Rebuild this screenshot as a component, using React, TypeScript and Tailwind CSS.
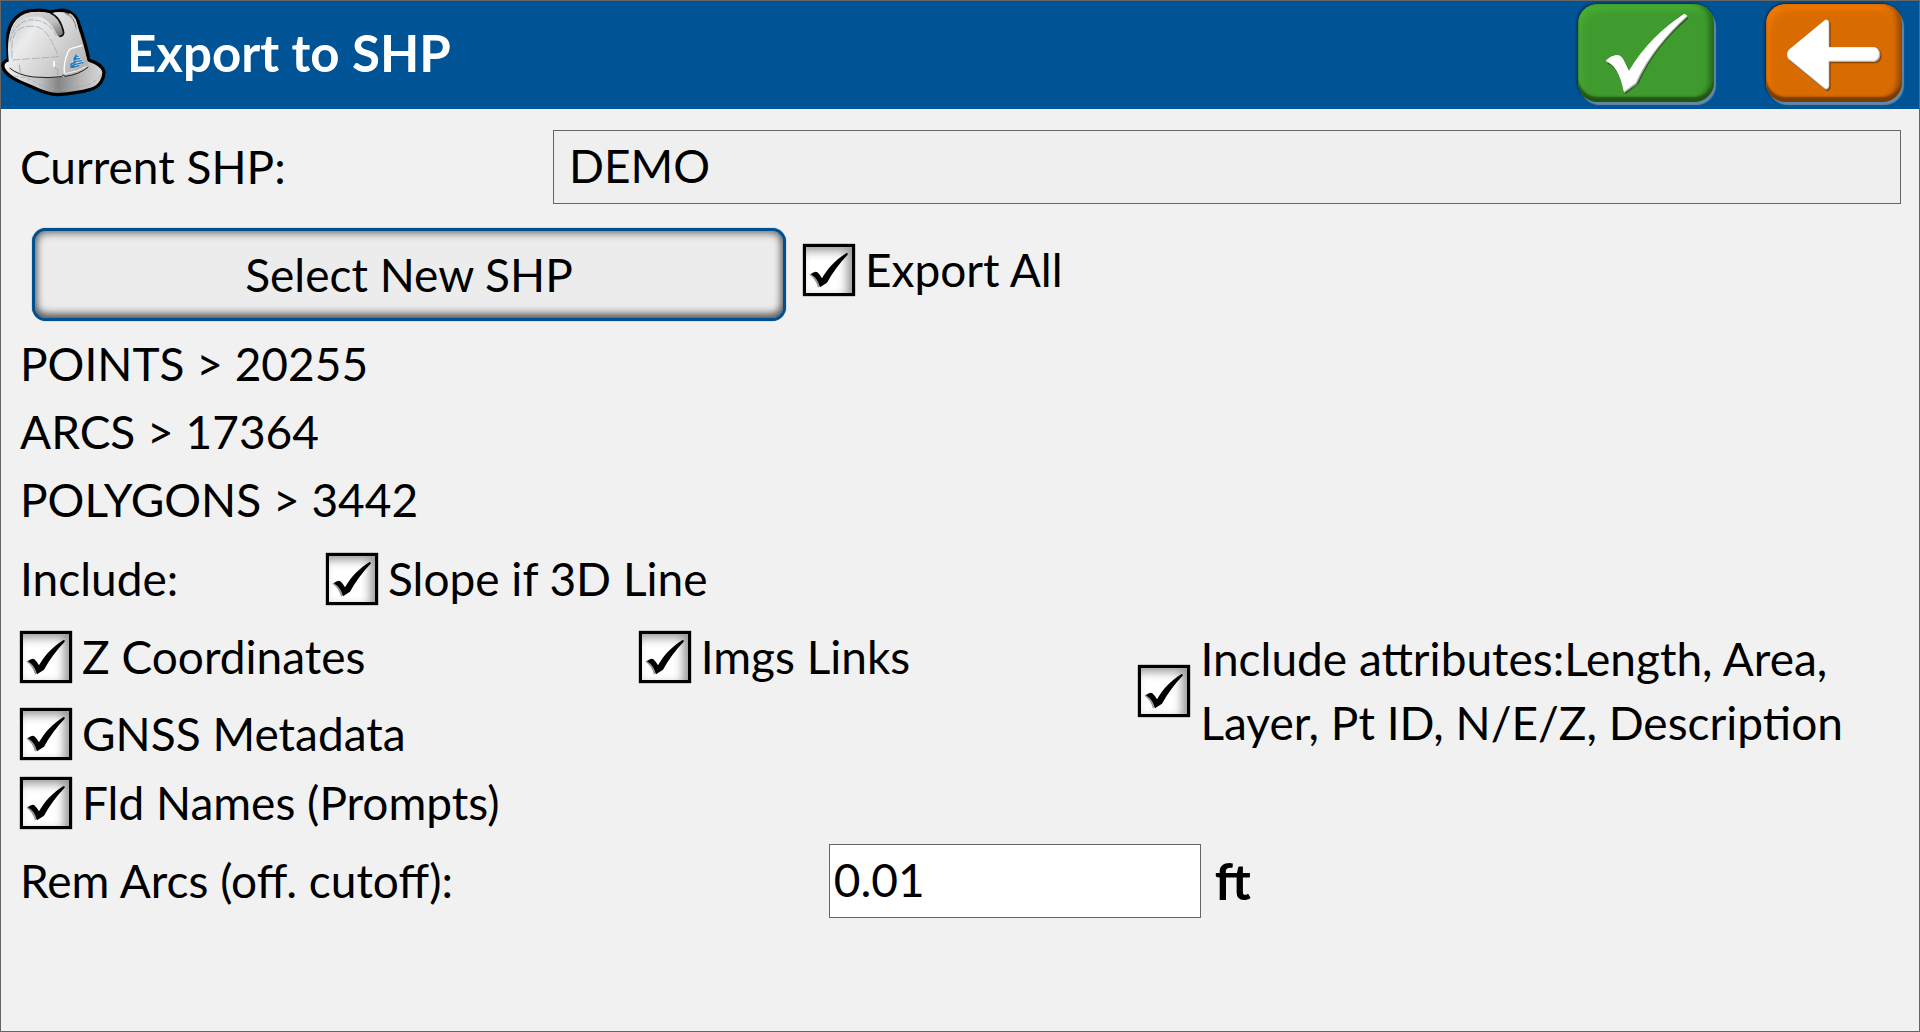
import { useId } from "react";

const FEATURE_COUNTS = [
  { name: "POINTS", count: 20255 },
  { name: "ARCS", count: 17364 },
  { name: "POLYGONS", count: 3442 },
];

function HardHatIcon() {
  return (
    <svg viewBox="3 3 318 300" className="h-[100px] w-[106px] shrink-0 self-start" aria-hidden="true">
      <defs>
        <linearGradient id="hat-shell" x1="0" y1="0.1" x2="1" y2="0.7">
          <stop offset="0" stopColor="#c4c4c4" />
          <stop offset="0.3" stopColor="#ececec" />
          <stop offset="0.65" stopColor="#d2d2d2" />
          <stop offset="1" stopColor="#b5b5b5" />
        </linearGradient>
        <linearGradient id="hat-brim" x1="0" y1="0" x2="1" y2="0">
          <stop offset="0" stopColor="#f4f4f4" />
          <stop offset="0.35" stopColor="#c4c4c4" />
          <stop offset="0.55" stopColor="#858585" />
          <stop offset="0.78" stopColor="#b8b8b8" />
          <stop offset="1" stopColor="#d8d8d8" />
        </linearGradient>
        <linearGradient id="hat-ridge" x1="0" y1="0" x2="1" y2="1">
          <stop offset="0" stopColor="#dcdcdc" />
          <stop offset="0.6" stopColor="#c2c2c2" />
          <stop offset="1" stopColor="#6c6c6c" />
        </linearGradient>
      </defs>
      <path
        d="M25 180C9 184 5 196 12 209C27 234 61 246 98 262Q142 284 174 284Q231 280 270 269C300 260 314 236 311 213C306 195 286 187 266 180C260 145 249 108 238 77C230 43 205 29 180 31Q164 33 152 36Q132 29 105 31C58 31 24 65 23 118Z"
        fill="url(#hat-brim)"
        stroke="#000"
        strokeWidth="10"
        strokeLinejoin="round"
      />
      <path
        d="M28 197C22 152 22 115 34 87C48 53 79 36 108 36L153 40Q183 30 205 43C224 54 233 75 238 100Q250 140 262 180Q266 194 261 204Q238 221 190 230Q115 239 63 222Q34 213 28 197Z"
        fill="url(#hat-shell)"
      />
      <path
        d="M32 105C44 65 68 49 100 50C133 47 152 66 174 109Q187 113 191 97C184 67 170 46 150 39L108 36C66 37 37 65 32 105Z"
        fill="url(#hat-ridge)"
      />
      <path d="M150 38C176 48 186 72 191 98Q190 109 178 109" fill="none" stroke="#111" strokeWidth="5" />
      <path d="M195 40Q224 50 230 89" fill="none" stroke="#777" strokeWidth="3" />
      <path d="M208 41C226 49 231 66 232 91" fill="none" stroke="#d4d4d4" strokeWidth="4" />
      <path
        d="M30 124C39 79 70 56 105 60C137 63 157 84 169 107"
        fill="none"
        stroke="#8199ad"
        strokeWidth="2"
        strokeDasharray="17 5"
      />
      <path
        d="M36 175V127C41 91 65 76 102 79C140 82 153 119 176 169L166 171L36 180"
        fill="none"
        stroke="#89a4b8"
        strokeWidth="2"
        strokeDasharray="24 5"
      />
      <path
        d="M29 204Q53 225 100 231Q146 235 184 230L190 225L195 229Q237 224 265 201"
        fill="none"
        stroke="#202020"
        strokeWidth="3"
      />
      <path d="M58 194L61 219M163 202L174 210L172 225" fill="none" stroke="#aaa" strokeWidth="3" />
      <path d="M162 183V201" stroke="#fff" strokeWidth="5" />
      <path
        d="M193 221Q190 187 204 156Q208 145 224 143L247 136"
        fill="none"
        stroke="#fff"
        strokeWidth="4"
        strokeLinejoin="round"
      />
      <path d="M195 221Q233 216 260 199" fill="none" stroke="#f2f2f2" strokeWidth="3" />
      <path
        d="M43 228L82 234L126 257L172 270L219 266L270 252Q296 240 307 216"
        fill="none"
        stroke="#93a5b2"
        strokeWidth="2"
        strokeDasharray="13 6"
      />
      <path d="M230 159L214 189L211 204L221 203L250 187Z" fill="#d9e6ee" />
      <path d="M230 159L221 174L219 187L211 191V204L221 203L227 189L229 176Z" fill="#1977ba" />
      <path
        d="M229 168L236 170M228 177L241 176M226 185L246 182M223 194L250 187M219 202L238 196"
        fill="none"
        stroke="#1977ba"
        strokeWidth="4"
      />
      <path d="M214 196L224 190M217 186L228 180" stroke="#c3dcec" strokeWidth="2" />
    </svg>
  );
}

function AcceptIcon() {
  return (
    <svg viewBox="0 0 408 294" className="h-[98px] w-[136px]" aria-hidden="true">
      <path
        d="M85 174C97 158 119 151 128 158C138 164 145 181 154 201C199 128 255 75 319 31L329 37C264 94 213 154 178 235L139 266C129 229 117 185 85 174Z"
        transform="translate(3 5)"
        fill="#164010"
        opacity="0.7"
      />
      <path
        d="M84 173C96 158 117 151 126 158C136 164 143 181 153 201C198 127 254 74 318 30Q326 28 329 38C265 96 214 156 176 241L139 267C131 231 118 184 84 173Z"
        fill="#aaa"
      />
      <path
        d="M83 171C95 156 117 149 126 155C136 161 143 179 153 200C198 125 254 72 318 30Q324 30 327 35C264 93 212 153 173 236L138 263C130 227 117 182 83 171Z"
        fill="#fff"
      />
    </svg>
  );
}

function BackIcon() {
  return (
    <svg viewBox="0 0 408 294" className="h-[98px] w-[136px]" aria-hidden="true">
      <path
        d="M178 47Q186 44 190 54V129H325C349 132 349 171 325 174H190V248Q186 261 176 256L67 166Q58 150 68 138Z"
        transform="translate(4 4)"
        fill="#643000"
        opacity="0.65"
      />
      <path
        d="M178 47Q186 44 190 54V129H325C349 132 349 171 325 174H190V248Q186 261 176 256L67 166Q58 150 68 138Z"
        fill="#b0b0b0"
      />
      <path
        d="M177 48Q185 45 188 54V130H324C344 133 344 167 324 170H188V246Q184 257 176 252L67 163Q60 150 68 138Z"
        fill="#fff"
      />
    </svg>
  );
}

type CheckFieldProps = {
  label: React.ReactNode;
};

function CheckField({ label }: CheckFieldProps) {
  const id = useId();

  return (
    <div className="flex items-center gap-2.5">
      <span className="relative size-[52px] shrink-0">
        <input
          id={id}
          type="checkbox"
          defaultChecked
          className="peer block size-full appearance-none border-3 border-black bg-white shadow-[inset_-5px_4px_10px_#999,0_0_1px_#000]"
        />
        <svg
          viewBox="0 0 156 156"
          className="pointer-events-none absolute inset-0 hidden size-full peer-checked:block"
          aria-hidden="true"
        >
          <path d="M19 92Q30 82 37 87L55 122L45 131Q38 104 19 92Z" fill="#999" />
          <path d="M24 91Q36 80 43 85Q49 90 57 103C74 73 99 46 131 27Q135 26 134 32C108 58 88 87 72 116L51 130Q45 104 24 91Z" />
        </svg>
      </span>
      <label htmlFor={id}>{label}</label>
    </div>
  );
}

export default function App() {
  return (
    <div className="min-h-screen border border-[#666] bg-[#f1f1f1] font-['Lato',sans-serif] text-[46px] leading-[64px] text-black">
      <header className="flex h-[108px] items-center bg-[#005495] pr-[17px] pb-1">
        <HardHatIcon />
        <h1 className="ml-5 flex-1 text-[51px] font-bold text-white">Export to SHP</h1>
        <div className="flex gap-[52px]">
          <button
            type="button"
            aria-label="Accept"
            className="rounded-[20px] bg-[#409b2f] shadow-[inset_0_-5px_2px_#205716,inset_-5px_-2px_5px_#296e1d,inset_3px_6px_6px_#47ad34,2px_3px_1px_#6487a5,-1px_-1px_3px_#002447]"
          >
            <AcceptIcon />
          </button>
          <button
            type="button"
            aria-label="Back"
            className="rounded-[20px] bg-[#d96c00] shadow-[inset_0_-5px_2px_#793b00,inset_-5px_-2px_5px_#9b4d00,inset_3px_6px_6px_#f07800,2px_3px_1px_#6487a5,-1px_-1px_3px_#002447]"
          >
            <BackIcon />
          </button>
        </div>
      </header>

      <main className="pt-[21px] pr-[18px] pl-[19px]">
        <div className="grid grid-cols-[17fr_43fr] items-center">
          <label htmlFor="current-shp">Current SHP:</label>
          <input
            id="current-shp"
            readOnly
            defaultValue="DEMO"
            className="h-[74px] w-full min-w-0 border border-[#666] bg-[#efefef] px-[15px] pb-1"
          />
        </div>

        <div className="mt-6 grid grid-cols-[754fr_1098fr] items-start gap-[17px] pl-3">
          <button
            type="button"
            className="h-[93px] rounded-[14px] border-3 border-[#00508f] bg-[#ececec] shadow-[inset_0_-4px_8px_#555,inset_0_2px_8px_#777,0_0_1px_#00508f]"
          >
            Select New SHP
          </button>
          <div className="pt-2.5">
            <CheckField label="Export All" />
          </div>
        </div>

        <ul className="mt-[9px]">
          {FEATURE_COUNTS.map((feature) => (
            <li key={feature.name} className="leading-[68px]">
              {feature.name} &gt; {feature.count}
            </li>
          ))}
        </ul>

        <div className="mt-[13px] flex items-center">
          <span className="w-[306px]">Include:</span>
          <CheckField label="Slope if 3D Line" />
        </div>

        <div className="mt-4 grid grid-cols-[619fr_500fr_763fr] items-start">
          <div className="leading-[60px]">
            <CheckField label="Z Coordinates" />
            <div className="mt-[17px]">
              <CheckField label="GNSS Metadata" />
            </div>
            <div className="mt-[9px]">
              <CheckField label="Fld Names (Prompts)" />
            </div>
          </div>
          <div className="leading-[60px]">
            <CheckField label="Imgs Links" />
          </div>
          <CheckField label="Include attributes:Length, Area, Layer, Pt ID, N/E/Z, Description" />
        </div>

        <div className="mt-[11px] flex items-center">
          <label htmlFor="arc-cutoff" className="w-[43%]">
            Rem Arcs (off. cutoff):
          </label>
          <input
            id="arc-cutoff"
            inputMode="decimal"
            defaultValue="0.01"
            className="h-[74px] w-[372px] border border-[#666] bg-white px-1 pb-1"
          />
          <span className="ml-3.5 text-[51px] font-bold">ft</span>
        </div>
      </main>
    </div>
  );
}
